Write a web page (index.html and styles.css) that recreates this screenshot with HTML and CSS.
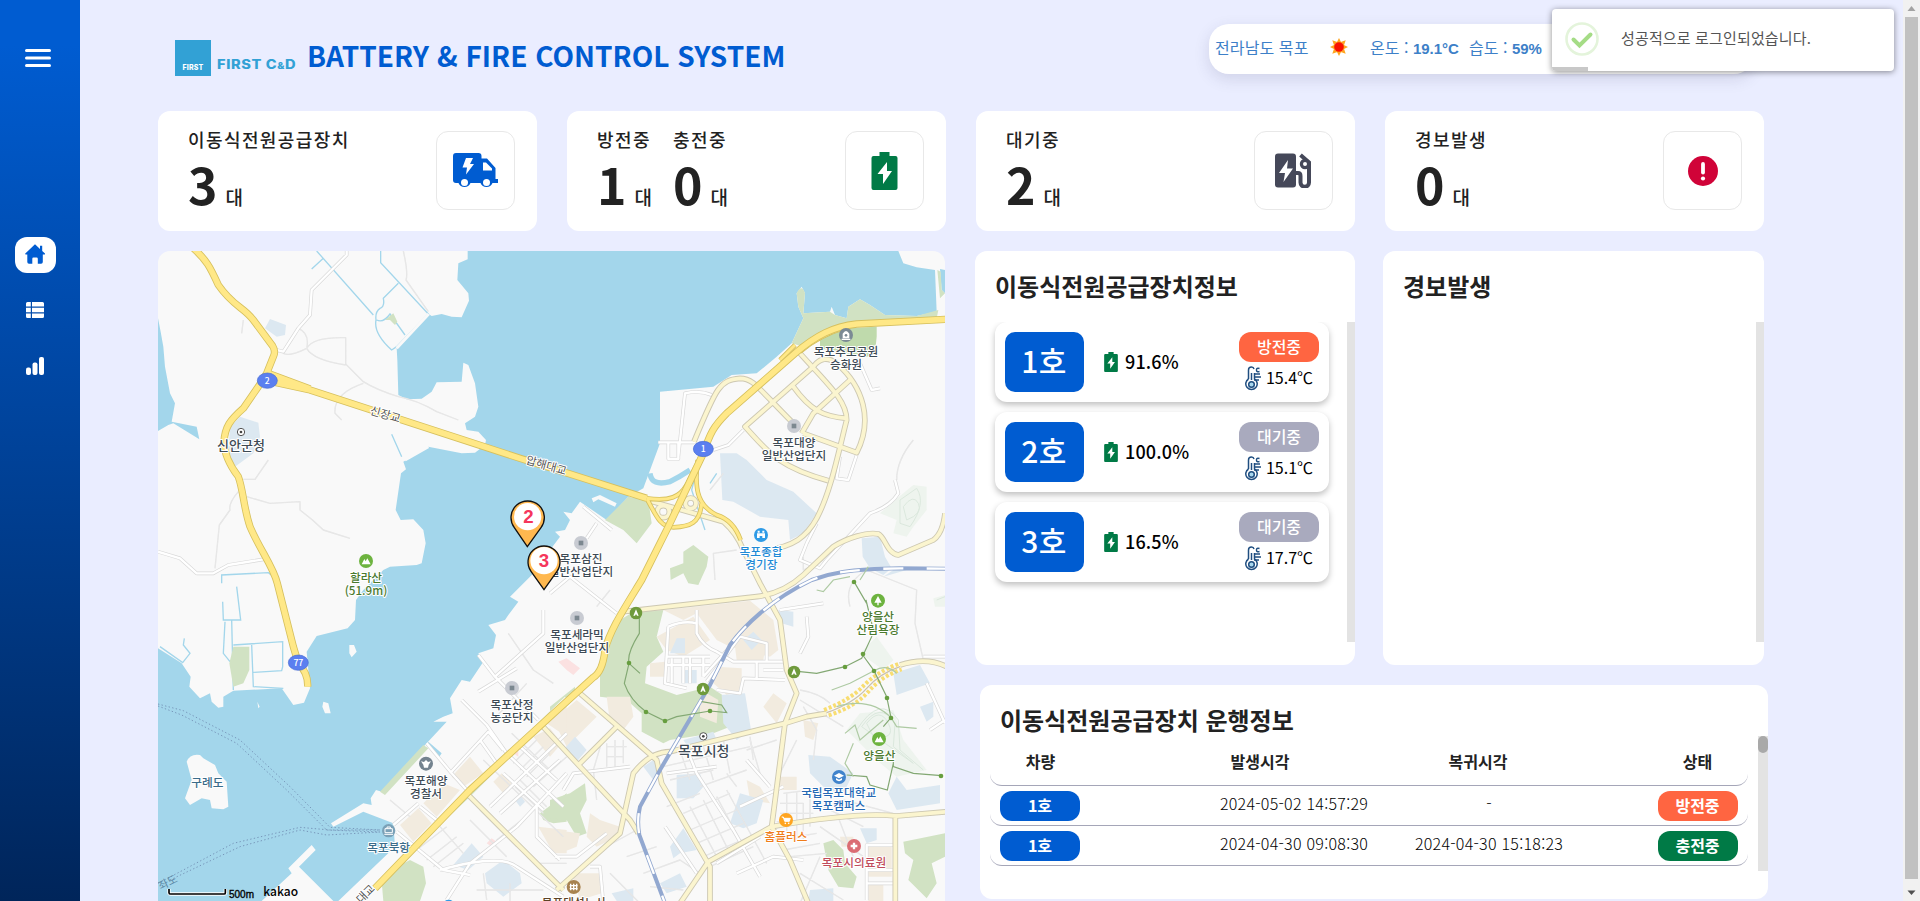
FILE: index.html
```html
<!DOCTYPE html>
<html lang="ko">
<head>
<meta charset="utf-8">
<title>BATTERY &amp; FIRE CONTROL SYSTEM</title>
<link rel="stylesheet" href="styles.css">
</head>
<body>
<svg class="defs" width="0" height="0" aria-hidden="true">
  <defs>
    <symbol id="battery" viewBox="0 0 26 38"><path d="M8 0h10v4h6q2 0 2 2v30q0 2-2 2H2q-2 0-2-2V6q0-2 2-2h6z" fill="#007a46"/><path d="M15.5 10 6 22h5.5v10L20.500 19h-5z" fill="#fff"/></symbol>
    <symbol id="thermo" viewBox="0 0 16 26"><g fill="none" stroke="#1f4e80" stroke-width="1.500"><path d="M3.500 13V4q0-3 3-3 2 0 2.500 2"/><path d="M3.500 13a5.700 5.700 0 1 0 6 0V7"/><path d="M6.500 7v7"/><path d="M9 8h6M9 11h7M9 14h5"/><path d="M14.500 2.500q-3-1-3 1.500t3 1.500"/><circle cx="6.500" cy="18.500" r="2.800" fill="#a9d8ef"/></g></symbol>
    <symbol id="peak" viewBox="-22 -22 44 44"><circle r="21" fill="#6db33f"/><path d="M-13 10-5-6l4 7 5-9 10 18z" fill="#fff"/></symbol>
    <symbol id="trailhead" viewBox="-20 -20 40 40"><circle r="19" fill="#6f9a3c"/><path d="M0-11 8 8H3L0 3l-3 5h-5z" fill="#fff"/></symbol>
    <symbol id="block" viewBox="-22 -22 44 44"><circle r="21" fill="#c8cbd2"/><rect x="-7" y="-7" width="14" height="14" fill="#7c8890"/></symbol>
    <symbol id="office" viewBox="-13 -13 26 26"><circle r="11" fill="#fff" stroke="#555" stroke-width="3"/><circle r="4" fill="#444"/></symbol>
  </defs>
</svg>
<div class="app">
  <aside class="sidebar">
    <svg class="menu" viewBox="0 0 26 18"><path d="M1.500 1.500h23M1.500 9h23M1.500 16.500h23" stroke="#fff" stroke-width="3" stroke-linecap="round"/></svg>
    <nav class="nav">
      <a class="nav-item active"><svg width="20" height="20" viewBox="0 0 20 20"><path d="M10 .3 15 5V1.800h2.200V7L20 9.600q.3.800-.6.900H17.800V18q0 1.700-1.700 1.700h-3.300v-5q0-1.200-1.200-1.200H8.500q-1.200 0-1.200 1.200v5H4q-1.700 0-1.700-1.700v-7.500H.8q-1-.2-.5-1z" fill="#005cd1"/></svg></a>
      <a class="nav-item"><svg width="18" height="16" viewBox="0 0 18 16" fill="#fff"><path d="M1.500 0H4.800v4.500H0v-3Q0 0 1.500 0zM6 0h10.500Q18 0 18 1.500v3H6zM0 5.800h4.800v4.400H0zM6 5.800h12v4.400H6zM0 11.500h4.800V16H1.500Q0 16 0 14.500zM6 11.500h12v3q0 1.500-1.500 1.500H6z"/></svg></a>
      <a class="nav-item"><svg width="18" height="18" viewBox="0 0 18 18" fill="#fff"><rect y="10.500" width="5" height="7.500" rx="2"/><rect x="6.500" y="5.500" width="5" height="12.500" rx="2"/><rect x="13" width="5" height="18" rx="2"/></svg></a>
    </nav>
  </aside>

  <main class="main">
    <header class="header">
      <div class="logo"><span class="logo-box">FIRST</span><span class="logo-name">FIRST C<small>&amp;</small>D</span></div>
      <h1 class="title">BATTERY &amp; FIRE CONTROL SYSTEM</h1>
      <div class="weather">
        <span class="region">전라남도 목포</span>
        <svg class="sun" viewBox="-9 -9 18 18"><path d="M0-9 2.500-4h-5zM0 9 2.500 4h-5zM-9 0l5-2.500v5zM9 0 4-2.500v5zM-6.700-6.700l5 1.700-3.300 3.300zM6.700-6.700l-5 1.700 3.300 3.300zM-6.700 6.700l5-1.700-3.300-3.300zM6.700 6.700l-5-1.700 3.300-3.300z" fill="#ffa51e"/><circle r="4.800" fill="#f81200"/></svg>
        <span class="temp">온도 : <b>19.1°C</b></span><span class="humid">습도 : <b>59%</b></span>
      </div>
    </header>

    <section class="stats">
      <article class="stat">
        <div class="stat-cols"><div><h2>이동식전원공급장치</h2><p><b>3</b>대</p></div></div>
        <div class="stat-icon"><svg width="45" height="36" viewBox="0 0 45 36"><path d="M3 0h22.500q3 0 3 3v2.500h5.500L42.500 15v11H45v4h-5.500a6.500 6.500 0 0 1-12 0h-10a6.500 6.500 0 0 1-12 0H3q-3 0-3-3V3q0-3 3-3z" fill="#005cd1"/><path d="M13 5h7l-3 6h4l-8 10.500 1-7H9.500zM30 9.500h3l6 6v2H30z" fill="#fff"/><circle cx="11.500" cy="29.500" r="3.500" fill="#fff"/><circle cx="33.500" cy="29.500" r="3.500" fill="#fff"/></svg></div>
      </article>
      <article class="stat">
        <div class="stat-cols"><div><h2>방전중</h2><p><b>1</b>대</p></div><div><h2>충전중</h2><p><b>0</b>대</p></div></div>
        <div class="stat-icon"><svg width="27" height="38"><use href="#battery"/></svg></div>
      </article>
      <article class="stat">
        <div class="stat-cols"><div><h2>대기중</h2><p><b>2</b>대</p></div></div>
        <div class="stat-icon"><svg width="37" height="35" viewBox="0 0 37 35"><path d="M3 .5h15q3 0 3 3v28q0 3-3 3H3q-3 0-3-3v-28q0-3 3-3z" fill="#454859"/><path d="M13 7 4 20h6l-1.500 9L18 15.500h-6z" fill="#fff"/><path d="M20 20h3q2.500 0 2.500 3v6.500a4.200 4.200 0 0 0 8.500 0V9.500L25.500 2" fill="none" stroke="#454859" stroke-width="4"/><circle cx="30" cy="11" r="3.600" fill="#fff" stroke="#454859" stroke-width="3.200"/></svg></div>
      </article>
      <article class="stat">
        <div class="stat-cols"><div><h2>경보발생</h2><p><b>0</b>대</p></div></div>
        <div class="stat-icon"><svg width="30" height="30" viewBox="0 0 30 30"><circle cx="15" cy="15" r="15" fill="#d00338"/><path d="M15 8v8.500" stroke="#fff" stroke-width="3.800" stroke-linecap="round"/><circle cx="15" cy="22.500" r="2.100" fill="#fff"/></svg></div>
      </article>
    </section>

    <section class="content">
      <div class="map">
      <svg viewBox="24 33 2361 1950" width="787" height="650">
        <defs>
          <g id="hwy">
            <path d="M125 20C170 60 180 80 205 135 250 200 280 200 310 240L368 318Q378 335 370 350L350 400 325 440 280 505C240 540 225 560 222 605 222 650 250 690 265 710 280 750 280 800 300 860 330 930 370 980 382 1030L430 1220 445 1270Q475 1300 473 1340"/>
            <path d="M355 400 480 447M355 423 480 450 1110 655 1260 702 1490 775"/>
            <path d="M2390 238 2120 252C2050 260 2000 285 1935 340L1730 520C1690 560 1680 580 1660 640L1555 860 1475 1020C1420 1110 1380 1170 1365 1230Q1358 1295 1330 1312L1200 1430 960 1650 675 1945"/>
          </g>
          <g id="ramp">
            <path d="M1490 775C1560 785 1590 770 1610 735L1650 655M1490 775C1520 830 1530 860 1570 862 1620 860 1650 850 1655 790M1643 660C1630 760 1650 800 1700 825Q1750 840 1772 900M1935 315 1890 360M2080 265Q2010 285 1950 335"/>
          </g>
          <g id="sec">
            <path d="M1632 605C1700 440 1710 420 1770 415 1810 415 1820 440 1930 550M1990 380 1785 560C1850 630 1880 680 2035 722M1950 340C2030 430 2090 480 2090 540 2060 660 2040 760 2000 835 1970 890 1930 920 1850 930M1990 380Q2020 340 2060 370C2140 440 2170 540 2120 638L1960 580M2100 420 1990 520 1955 580M1930 440C1980 510 2020 530 2090 535"/>
            <path d="M1490 780 1720 845Q1760 880 1780 930L1830 1030 1890 1140 1910 1290 1940 1360 1905 1450 1865 1760 1920 1860 1975 1990"/>
            <path d="M1420 1115 1820 1070Q1900 1060 1960 1005L2050 920C2090 895 2150 875 2185 882 2205 890 2210 940 2245 945L2350 900Q2378 880 2385 820"/>
            <path d="M1290 1360 1520 1560 1535 1630 1680 1880V1990M2390 1280Q2330 1250 2250 1275M2030 1420 1970 1430 1905 1450 1560 1535Q1500 1535 1450 1600L1410 1780 1220 1950M1170 1450 1290 1580 1440 1740 1465 1780M955 1665 1240 1950M1285 1575 1405 1455M2390 1715 2240 1728Q2120 1715 1865 1760L1675 1865 1590 1990M2236 1730V1990"/>
            <circle cx="1622" cy="790" r="16"/><circle cx="1540" cy="815" r="18"/>
          </g>
          <g id="minor">
            <path d="M590 33V45L485 150 480 225 445 265 400 335 380 330M24 935 90 955 140 1000H190L235 975 340 958M1585 650 1605 460Q1650 450 1685 465M1525 607H1640M1555 610V657H1585V610M1690 630 1735 615 1780 570M2070 650 2060 715 2095 720 2120 645M2130 370 2165 450 2190 445M2000 850 1970 910 1950 960 2010 985 2030 960 2160 820Q2220 800 2245 760L2235 720"/>
            <path d="M1385 870 1300 800M1310 895 1340 850M2020 1090 1890 1110M1400 1120 1260 1010 1200 1060M1180 1110V1180L1035 1310 985 1245M1035 1310 1070 1345 1165 1440M985 1355 1100 1285M935 1380 1010 1455 1070 1540M830 1510 905 1600 955 1655M900 1600 1015 1475 1060 1530M990 1500 1040 1570M810 1700 860 1740M730 1755 805 1690M740 1775 880 1890 960 1905M870 1890Q1050 1840 1100 1880L1240 1970M890 1980 960 1870 1100 1760 1250 1600M1020 1700 1250 1480M1050 1720 1230 1560M1080 1550 1240 1700M1060 1600 1180 1710M1110 1520 1220 1620M1160 1690V1790L1230 1860"/>
            <path d="M1640 1110V1180Q1660 1220 1700 1235L1750 1265H1900M1555 1160Q1600 1140 1640 1150M1555 1160 1545 1330 1610 1345M1550 1250H1680M1545 1275H1680M1600 1250V1330M1620 1250V1330M1660 1250V1310M1565 1255V1330M1660 1310 1740 1220M1670 1325 1770 1190 1850 1210V1265M1700 1350 1770 1360 1780 1315 1905 1320M1820 1265V1320M1840 1290H1900"/>
            <path d="M1950 1240 1975 1190 1970 1130M2320 1250H2385M2330 1330 2385 1450M2340 1470 2385 1440M1240 1650 1270 1600 1440 1580M1320 1880 1350 1880 1360 1990M1215 1850H1280L1370 1780M1620 1550 1640 1600 1750 1770 1830 1910M1760 1900 1870 1850 1960 1860M1700 1870 1830 1790M2150 1980V1815H2230M2150 1890H2230M2150 1930H2230M1770 1700 1900 1640M1790 1560 1860 1640M1545 1760 1640 1900M1550 1600 1700 1580"/>
          </g>
          <g id="lanes">
            <path d="M1540 1580 1800 1520M1560 1620 1690 1590M1650 1640 1790 1590M1550 1700 1650 1660M1600 1720 1740 1660M1620 1770 1760 1710M1640 1810 1780 1750M1660 1850 1800 1790M1680 1880 1810 1820M1590 1530 1620 1620M1660 1520 1690 1620M1720 1500 1740 1600M1800 1490 1810 1560M1620 1700 1700 1850M1660 1680 1740 1840M1700 1670 1780 1820M1730 1650 1850 1870"/>
            <path d="M1890 1690H1960V1800M1900 1660 1980 1650V1760M1890 1720H1990M1880 1745H1990M1910 1660V1800M1940 1655V1800M1880 1800 2000 1780M1900 1830 2010 1810M1920 1850 2030 1840M1370 1520H1430M1370 1550H1420M1370 1510V1580M1395 1500V1580M1420 1500V1570M1360 1490 1330 1590 1340 1680M1350 1830 1460 1770M1430 1850 1520 1820M1480 1900 1590 1860 1650 1900M1380 1900 1470 1990M1500 1940 1600 1950"/>
            <path d="M1090 1570 1160 1500M1110 1590 1180 1520M1130 1610 1200 1540M1150 1640 1250 1550M1095 1640 1180 1720M1110 1620 1190 1700M1000 1560 1240 1790M990 1710 1100 1820M960 1740 1070 1850M800 1830 890 1760M830 1860 920 1790M850 1880 940 1810M870 1760 940 1840M1040 1800 1140 1720M1210 1330 1150 1290 1075 1180M1030 1440 1130 1330M1085 1480 1200 1590M720 1680 780 1730M980 1950H1180M1000 1900 1010 1980M1080 1930V1985M1160 1870 1250 1870"/>
            <path d="M280 240 275 280M445 265Q480 280 470 325 420 350 400 340M470 325Q490 290 587 293V372L640 425Q680 450 745 470 800 480 860 515L925 540M470 325Q490 360 587 375M640 430Q550 460 555 520L575 540M760 33Q775 100 768 120L835 215M355 660 315 718H280M290 770 360 790 450 785V810Q490 840 520 870L600 895M265 755Q235 790 240 810L208 855 195 985M1950 1350Q2010 1360 2040 1390M1950 1380 2080 1460M1760 1640 1730 1600M1960 1400 2000 1470 1990 1560M1880 1500 1790 1530M2100 1100Q2080 1030 2150 990L2300 1050 2295 1150 2320 1260M1680 750 1720 700M2240 720Q2240 660 2290 600M1695 1020 1690 940 1760 930M2020 960 1960 990 1960 950M1380 1050 1340 1100M1890 1600 1940 1500M1800 1500 1830 1600M2020 1700 2140 1760M2060 1720 2110 1850M2010 1760 2140 1850M2080 1680 2230 1720M1950 1900 2080 1980M2010 1850 1950 1990"/>
          </g>
        </defs>

        <rect x="24" y="33" width="2361" height="1950" fill="#f9f9f9"/>
        <path class="water" d="M953 33V58L925 70 922 120 955 160 957 182 935 232 905 230 875 222 845 228 836 222 740 325 742 360 745 465 770 478 815 476 845 455 860 427 935 425 940 368 955 375 975 430 985 500 975 530 945 550 950 570 985 575 1008 600 1005 615 975 638 935 640 835 620 760 665 768 688 753 700 737 810 752 840 790 838 820 870 827 910 815 970 800 975 720 980 700 990 640 1050 618 1080 615 1140 593 1165 500 1188 470 1235 480 1345 462 1388 430 1395 395 1345 250 1352 220 1370 220 1400 205 1403 185 1385 180 1360 150 1375 118 1340 122 1310 95 1270 24 1225V1983H335L425 1900 415 1885 485 1815 497 1830 447 1880 550 1983H565L735 1820 730 1750 640 1715 550 1760 543 1750 640 1690 665 1695 662 1675 678 1650 695 1655 830 1510 890 1445 850 1445 880 1430 908 1420 900 1375 935 1320 960 1325 1000 1265 985 1240 1030 1225 1038 1185 1015 1155 1065 1140 1075 1125 1105 1085 1080 1070 1140 1010 1180 970 1200 930 1230 890 1215 875 1245 870 1260 840 1240 815 1265 820 1290 785 1370 840 1435 770 1480 745 1530 610V455L1690 440 1745 405 1820 400 1880 350 1925 310 1960 235 1945 200 1940 160 1955 140 1965 160 1960 220 2040 215 2045 200 2055 225 2090 235 2095 200 2130 178 2160 195 2205 225 2300 228 2360 215 2355 90 2300 82 2260 70 2245 33Z"/>
        <path class="water" d="M24 235 32 275 40 320 45 380 60 460 75 490 65 545 140 560 148 598 70 550 55 555 24 573ZM835 1505 875 1540 868 1550 832 1515ZM2370 87 2385 90V160L2375 150Z"/>
        <g class="canal">
          <path d="M500 33 670 225M485 87 520 55M692 33V68L835 222 740 320 725 330Q670 280 678 240 675 215 690 205 705 200 700 175L745 130M680 240Q700 250 720 222L765 285M725 583 755 650M215 1030 215 1005 355 998 370 1010M218 1085 220 1140H272L260 1040M225 1145 220 1240 240 1265M245 1140 250 1350M250 1215 398 1205V1280L395 1292 310 1297M305 1215 310 1340 400 1345M30 1220 98 1268 120 1240 100 1215 103 1195"/>
          <path d="M1500 700Q1505 740 1560 725 1590 710 1620 690" stroke-width="16"/>
          <path d="M1690 630Q1650 645 1640 690L1625 750 1665 870M1680 730 1700 700"/>
        </g>
        <path d="M740 325 836 222M765 660 835 620" class="quay"/>
        <path fill="#f9f9f9" d="M110 1565Q120 1540 150 1545L160 1555 195 1575 205 1600 230 1625 235 1700 220 1708 185 1705 180 1680 155 1675 120 1695 105 1675 125 1620ZM598 1215 612 1215 620 1235 605 1252 598 1240ZM520 1385 535 1390 542 1420 525 1420 517 1400ZM322 1385 329 1400 325 1405ZM1325 775 1350 765 1400 790 1395 800 1345 778 1330 787Z"/>

        <g fill="#d1e2c3">
          <path d="M1960 235 1945 200 1940 160Q1955 130 1965 160L1960 220 2040 215 2055 225 2090 235 2095 200 2130 178 2160 195 2205 225 2300 228 2365 210 2360 235 2120 250Q2020 280 1960 320L1925 310ZM2362 90 2372 95 2375 150 2385 160 2370 175ZM1365 840 1435 770 1495 780 1505 850 1460 910 1420 870ZM1560 985 1600 970 1600 935 1630 915 1675 950 1670 980 1645 1035 1615 1030 1600 1000 1562 1020ZM705 240 730 220 742 245 735 255 720 240ZM250 1220H298V1290L280 1330 250 1340 238 1270Z"/>
          <path d="M1395 1150 1450 1115 1540 1110 1520 1190 1540 1235 1490 1280 1485 1330 1580 1365 1680 1340 1725 1370 1720 1430 1740 1460 1690 1480 1560 1500 1540 1510 1475 1475 1475 1420 1430 1380 1350 1370 1350 1300 1375 1240ZM1200 1400 1275 1340 1275 1350 1200 1425ZM690 1655 820 1515 835 1525 705 1665ZM1245 1370 1060 1550 790 1815 800 1820 960 1670 1090 1540 1260 1390ZM695 1925 740 1880 780 1860 820 1880 828 1930 810 1983H700ZM1170 1720 1250 1660V1745L1210 1750 1180 1740Z"/>
          <path d="M1200 1680 1260 1660 1305 1630 1310 1680 1290 1720 1310 1780 1280 1790 1250 1740 1200 1735ZM2260 1805 2385 1780V1850L2345 1870 2360 1930 2330 1975 2275 1920 2290 1860 2265 1840ZM2020 1810 2050 1800 2080 1830 2085 1870 2120 1910 2110 1945 2065 1940 2035 1890Z"/>
        </g>
        <path fill="#bfdaac" d="M2010 290 2080 265 2180 260V290L2175 340 2150 350 2090 340 2010 325Z"/>
        <g fill="#eef4ee"><path d="M2235 780 2290 735 2330 740 2330 810 2290 860 2270 890 2230 880 2240 840 2190 820ZM2090 1470 2130 1420 2230 1410 2260 1500 2330 1590 2240 1610 2180 1560ZM2130 1240 2180 1190 2230 1260 2200 1290ZM2350 1075 2385 1065V1100L2355 1100Z"/></g>
        <g fill="#f2ebdf">
          <path d="M1455 1120 1800 1082 1870 1140 1885 1230 1860 1250 1740 1220 1700 1200 1640 1120 1600 1140 1540 1110ZM1750 1180 1800 1150 1850 1200 1840 1260H1760ZM1520 1190 1630 1130 1680 1200 1600 1250 1550 1230ZM1700 1280 1775 1285 1775 1350 1730 1365 1690 1330ZM1500 1270 1545 1265V1310H1500ZM1650 1390 1670 1360 1705 1380 1700 1450 1650 1430ZM1840 1400 1870 1360 1910 1390 1880 1450ZM1370 1370 1440 1370 1450 1430 1420 1470 1380 1450ZM1210 1440 1280 1380 1340 1430 1250 1520Z"/>
          <path d="M905 1610 960 1550 1000 1600 940 1640ZM820 1690 880 1630 930 1650 860 1730ZM750 1755 805 1705 845 1750 790 1805ZM1030 1625 1055 1600 1085 1630 1060 1660ZM1150 1490 1200 1465 1235 1510 1200 1550ZM1165 1760 1250 1770V1840L1210 1840ZM1190 1450 1250 1390V1490ZM1320 1720 1350 1740 1410 1760 1400 1790 1340 1820 1310 1790ZM1210 1770 1290 1780 1280 1820 1230 1840ZM1265 1900 1355 1900V1960L1290 1980ZM2155 1820H2225V1910H2155ZM2155 1930H2200V1983H2155ZM1890 1610H1940V1650H1890ZM1790 1620 1830 1640 1860 1690 1800 1680ZM1960 1440 2005 1450 1990 1500 1965 1490ZM2070 1790H2110V1820H2075Z"/>
        </g>
        <g fill="#dce8f1">
          <path d="M1710 640 1760 640 1790 660 1850 720 1930 755 2000 820 1960 880 1920 900 1915 840 1830 830 1750 785 1717 780ZM240 560 270 530 325 548 330 590 310 640 255 680 235 640ZM345 265 360 237 408 255 405 285 380 290ZM2135 895 2190 890 2205 950 2225 985 2200 1005 2160 985 2138 950ZM1975 1545 2040 1550 2110 1600 2080 1660 2030 1650 1980 1600ZM1715 1365 1785 1360 1803 1470 1760 1500 1720 1450ZM1580 1605 1650 1600 1660 1640 1630 1675H1580ZM1770 1660 1840 1680 1820 1750 1780 1765 1740 1750ZM1560 1820 1600 1765 1640 1830 1590 1840 1570 1855ZM1885 1110 1930 1115 1930 1160 1895 1150ZM1580 1195H1605V1240H1560ZM1595 1290H1640V1330H1595ZM1780 1200 1810 1175 1835 1200 1805 1230ZM2230 1300 2310 1275 2340 1330 2240 1365ZM2310 1400 2350 1385 2350 1430 2330 1445ZM2215 1660 2240 1610 2270 1650 2370 1635 2370 1690 2240 1710ZM2130 1765H2180V1800L2150 1810ZM2270 990H2230L2200 1010ZM1240 1530 1275 1490 1310 1530 1280 1565ZM1480 1580 1510 1560 1530 1590 1510 1620ZM1600 1500 1690 1475 1700 1500 1620 1530ZM910 1875 965 1810 1000 1850 955 1890ZM1005 1900 1060 1860 1110 1900 1115 1930 1060 1970 1010 1930ZM1095 1680 1110 1665 1125 1685 1110 1700ZM1385 1960 1450 1945V1983H1400ZM1530 1930 1590 1900 1610 1940 1550 1960ZM1980 1950 2050 1945 2050 1983H1975Z"/>
        </g>
        <path fill="#fbe1e1" d="M1225 1265 1250 1255 1290 1285 1270 1305 1250 1290ZM1010 1810 1025 1795 1040 1805 1025 1820ZM1090 1540 1105 1530V1550Z"/>

        <use href="#lanes" class="lane-case"/><use href="#lanes" class="lane"/>
        <use href="#minor" class="minor-case"/><use href="#minor" class="minor"/>
        <g fill="none" stroke="#dbe8dd" stroke-width="3"><path d="M2250 780 2300 745Q2330 790 2280 860L2250 850ZM2260 800Q2290 760 2305 790T2270 840ZM2150 1450Q2190 1400 2215 1450T2170 1490ZM2135 1460Q2190 1380 2235 1450L2230 1520 2290 1570ZM2120 1470Q2190 1360 2245 1440L2250 1530 2320 1590M2360 1080 2385 1070"/></g>
        <use href="#sec" class="sec-case"/><use href="#sec" class="sec"/>
        <use href="#ramp" class="ramp-case"/><use href="#ramp" class="ramp"/>
        <use href="#hwy" class="hwy-case"/><use href="#hwy" class="hwy"/>
        <path d="M2030 1418Q2110 1390 2150 1345T2250 1280" fill="none" stroke="#cbc1ac" stroke-width="4"/>
        <path d="M2022 1410Q2100 1380 2140 1338T2245 1272M2036 1426Q2116 1400 2156 1354T2255 1288" fill="none" stroke="#f8dd72" stroke-width="12" stroke-dasharray="9 6"/>
        <g fill="none"><path d="M2390 986 2250 985C2090 988 2040 1000 1985 1020 1860 1080 1780 1160 1740 1215L1680 1335 1530 1590 1470 1700Q1460 1740 1468 1785L1545 1990" stroke="#92a8d0" stroke-width="12"/><path d="M2390 986 2250 985C2090 988 2040 1000 1985 1020 1860 1080 1780 1160 1740 1215L1680 1335 1530 1590 1470 1700Q1460 1740 1468 1785L1545 1990" stroke="#fff" stroke-width="7" stroke-dasharray="60 70"/></g>
        <g fill="none" stroke="#83a873" stroke-width="3.500">
          <path d="M1468 1130V1180Q1430 1240 1437 1270L1423 1330Q1440 1380 1488 1415L1545 1443 1580 1430 1680 1413 1730 1418 1715 1395 1655 1385M1437 1270 1470 1300M1950 1295 2000 1300 2085 1280 2135 1255 2165 1190 2170 1170 2148 1080 2150 1090 2112 1025M2138 1245 2172 1292 2210 1370 2223 1433 2200 1460M2230 1560 2230 1580 2290 1600 2375 1607M2230 1570 2212 1650 2160 1635 2150 1610 2090 1605"/>
          <path stroke="#aecaa3" d="M2045 1350 2100 1330 2172 1292Q2210 1270 2240 1300M2060 1400Q2160 1370 2223 1433L2240 1460 2300 1465M2085 1480 2115 1455 2130 1500 2200 1440M2110 1510 2085 1570 2110 1610M2000 1050 2020 1055 2050 1020 2100 1010M2130 1020 2155 980"/>
        </g>
        <g fill="#679e3f"><circle cx="1437" cy="1269" r="7"/><circle cx="1488" cy="1416" r="7"/><circle cx="1545" cy="1443" r="7"/><circle cx="1680" cy="1413" r="7"/><circle cx="2085" cy="1281" r="7"/><circle cx="2139" cy="1242" r="7"/><circle cx="2172" cy="1293" r="7"/><circle cx="2211" cy="1374" r="7"/><circle cx="2223" cy="1434" r="7"/><circle cx="2112" cy="1026" r="7"/><circle cx="2373" cy="1608" r="7"/></g>
        <g fill="none" stroke="#7796ba" stroke-width="3" stroke-dasharray="4 7"><path d="M24 1392 100 1412 270 1500 420 1640 540 1762 690 1770M24 1398 95 1425 260 1510 410 1650 530 1770 690 1776M24 1930 100 1890 250 1810 450 1762 540 1770 690 1770M60 1920 270 1820 450 1770 530 1785 690 1776"/></g>

        <g class="shield"><ellipse cx="352" cy="422" rx="30" ry="23"/><ellipse cx="1660" cy="627" rx="30" ry="23"/><ellipse cx="445" cy="1268" rx="30" ry="23"/></g>
        <g class="shield-no"><text x="352" y="431">2</text><text x="1660" y="636">1</text><text x="445" y="1277">77</text></g>
        <use href="#office" x="260" y="563" width="26" height="26"/><use href="#office" x="1647" y="1476" width="26" height="26"/>
        <use href="#peak" x="626" y="941" width="44" height="44"/><use href="#peak" x="2165" y="1475" width="44" height="44"/>
        <use href="#trailhead" x="1438" y="1099" width="40" height="40"/><use href="#trailhead" x="1639" y="1327" width="40" height="40"/><use href="#trailhead" x="1912" y="1276" width="40" height="40"/>
        <use href="#block" x="1910" y="536" width="44" height="44"/><use href="#block" x="1271" y="887" width="44" height="44"/><use href="#block" x="1259" y="1112" width="44" height="44"/><use href="#block" x="1064" y="1322" width="44" height="44"/>
        <g class="poi">
          <circle cx="2088" cy="285" r="21" fill="#7b8a94"/><path fill="#fff" d="M2078 295v-14q10-16 20 0v14zM2075 296h26v4h-26z"/><circle cx="2088" cy="286" r="4" fill="#7b8a94"/>
          <circle cx="1833" cy="885" r="21" fill="#2f9be6"/><path fill="#fff" d="M1821 880h24v14h-8v-6h-8v6h-8zM1823 872h6v6h-6zM1837 872h6v6h-6z"/>
          <circle cx="2184" cy="1082" r="21" fill="#6db33f"/><path fill="#fff" d="M2184 1068 2195 1088H2186V1096H2182V1088H2173Z"/>
          <circle cx="828" cy="1571" r="21" fill="#74838f"/><path fill="#fff" d="M813 1564 822 1566 828 1560 834 1566 843 1564 836 1574 834 1583H822L820 1574Z"/>
          <circle cx="716" cy="1772" r="20" fill="#7ba1b7"/><path d="M705 1766h22v12h-22zM711 1766v-5h10v5M703 1783h26" fill="none" stroke="#fff" stroke-width="3"/>
          <circle cx="2067" cy="1611" r="21" fill="#3f83cc"/><path fill="#fff" d="M2067 1599 2082 1607 2067 1615 2052 1607ZM2058 1614 2067 1619 2076 1614V1620Q2067 1627 2058 1620Z"/>
          <circle cx="1908" cy="1740" r="21" fill="#ffa41f"/><path d="M1895 1731h5l4 13h14l3-9h-19" fill="#fff" stroke="#fff" stroke-width="3"/><circle cx="1906" cy="1750" r="2.500" fill="#fff"/><circle cx="1916" cy="1750" r="2.500" fill="#fff"/>
          <circle cx="2112" cy="1818" r="21" fill="#db6d74"/><path d="M2112 1808v20M2102 1818h20" stroke="#fff" stroke-width="7"/>
          <circle cx="1271" cy="1941" r="21" fill="#a88350"/><path d="M1262 1931v20M1271 1931v20M1280 1931v20M1259 1937h24M1259 1946h24" stroke="#fff" stroke-width="4"/>
          <circle cx="896" cy="1997" r="18" fill="#2f9be6"/>
        </g>
        <g class="label">
          <text x="273" y="630" font-size="39">신안군청</text><text x="1661" y="1548" font-size="42">목포시청</text>
          <text transform="translate(703 535) rotate(16)" class="road">신장교</text><text transform="translate(1186 688) rotate(16)" class="road">압해대교</text><text transform="translate(655 1970) rotate(-45)" class="road">대교</text>
          <text x="2088" y="347">목포추모공원</text><text x="2088" y="386">승화원</text>
          <text x="1932" y="620">목포대양</text><text x="1932" y="659">일반산업단지</text>
          <text x="1293" y="970">목포삼진</text><text x="1293" y="1009">일반산업단지</text>
          <text x="1281" y="1196">목포세라믹</text><text x="1281" y="1235">일반산업단지</text>
          <text x="1086" y="1406">목포산정</text><text x="1086" y="1445">농공단지</text>
          <text x="828" y="1635">목포해양</text><text x="828" y="1674">경찰서</text>
          <g fill="#3a6c8a"><text x="716" y="1836">목포북항</text><text x="172" y="1640">구례도</text></g>
          <g fill="#1f8ad6"><text x="1833" y="948">목포종합</text><text x="1834" y="987">경기장</text></g>
          <g fill="#4b7a2f"><text x="648" y="1025">할라산</text><text x="648" y="1064">(51.9m)</text><text x="2184" y="1144">양을산</text><text x="2184" y="1183">산림욕장</text><text x="2188" y="1560">양을산</text></g>
          <g fill="#2468b4"><text x="2066" y="1672">국립목포대학교</text><text x="2066" y="1711">목포캠퍼스</text></g>
          <text x="1908" y="1802" fill="#ef7d1a">홈플러스</text><text x="2112" y="1880" fill="#c04c5c">목포시의료원</text>
          <text x="1272" y="2001" fill="#5c4327">목포대성노사</text>
        </g>
        <text transform="translate(32 1950) rotate(-26)" class="sea">좌도</text>
        <g stroke="#111" stroke-width="4" fill="#ffb84f"><path d="M1132 920 1093 863A50 50 0 1 1 1173 863Z"/><path d="M1182 1049 1143 994A48 48 0 1 1 1221 994Z"/></g>
        <circle cx="1133" cy="830" r="41" fill="#fff"/><circle cx="1182" cy="962" r="41" fill="#fff"/>
        <g class="pin-no"><text x="1135" y="850">2</text><text x="1182" y="982">3</text></g>
        <path d="M57 1947V1958Q57 1962 62 1962H222Q226 1962 226 1958V1947" fill="none" stroke="#fff" stroke-width="10"/><path d="M57 1947V1958Q57 1962 62 1962H222Q226 1962 226 1958V1947" fill="none" stroke="#000" stroke-width="5"/>
        <text x="237" y="1974" class="scale">500m</text><text x="340" y="1969" class="kakao">kakao</text>
      </svg>
      </div>

      <div class="side">
        <div class="panels">
          <section class="panel">
            <h3>이동식전원공급장치정보</h3>
            <div class="scroll">
              <div class="vehicles">
                <article class="vehicle"><span class="no">1호</span><svg class="bat" width="14" height="20"><use href="#battery"/></svg><span class="pct">91.6%</span><div class="state"><span class="tag discharge">방전중</span><span class="deg"><svg width="16" height="26"><use href="#thermo"/></svg>15.4℃</span></div></article>
                <article class="vehicle"><span class="no">2호</span><svg class="bat" width="14" height="20"><use href="#battery"/></svg><span class="pct">100.0%</span><div class="state"><span class="tag idle">대기중</span><span class="deg"><svg width="16" height="26"><use href="#thermo"/></svg>15.1℃</span></div></article>
                <article class="vehicle"><span class="no">3호</span><svg class="bat" width="14" height="20"><use href="#battery"/></svg><span class="pct">16.5%</span><div class="state"><span class="tag idle">대기중</span><span class="deg"><svg width="16" height="26"><use href="#thermo"/></svg>17.7℃</span></div></article>
              </div>
              <div class="track"></div>
            </div>
          </section>
          <section class="panel">
            <h3>경보발생</h3>
            <div class="scroll"><div class="vehicles"></div><div class="track"></div></div>
          </section>
        </div>
        <section class="trips">
          <h3>이동식전원공급장치 운행정보</h3>
          <div class="trip-scroll">
            <div class="table">
              <div class="row head"><span>차량</span><span>발생시각</span><span>복귀시각</span><span>상태</span></div>
              <div class="row"><span><i class="tag unit">1호</i></span><span class="time">2024-05-02 14:57:29</span><span class="time">-</span><span><i class="tag discharge">방전중</i></span></div>
              <div class="row"><span><i class="tag unit">1호</i></span><span class="time">2024-04-30 09:08:30</span><span class="time">2024-04-30 15:18:23</span><span><i class="tag charge">충전중</i></span></div>
            </div>
            <div class="track wide"><div class="thumb"></div></div>
          </div>
        </section>
      </div>
    </section>
  </main>

  <div class="page-scroll"><svg width="17" height="17"><path d="M4.500 11h8L8.500 6z" fill="#a3a3a3"/></svg><div class="page-thumb"></div><svg width="17" height="17"><path d="M4.500 6.500h8L8.500 11z" fill="#505050"/></svg></div>
</div>

<div class="toast">
  <svg width="34" height="34" viewBox="0 0 34 34"><circle cx="17" cy="17" r="15.500" fill="none" stroke="#e4f4db" stroke-width="2.600"/><path d="M8.500 17.500 14.500 23.500 25.500 12.500" fill="none" stroke="#a5dc86" stroke-width="4" stroke-linecap="round"/></svg>
  <span>성공적으로 로그인되었습니다.</span>
  <div class="toast-bar"></div>
</div>
</body>
</html>
```
FILE: styles.css
```css
* { box-sizing: border-box; margin: 0; padding: 0; }
body { width: 1920px; height: 901px; overflow: hidden; background: #eaedff; color: #222; font-family: "Noto Sans CJK KR", "Noto Sans", sans-serif; }
.defs { position: absolute; }
.app { display: grid; grid-template-columns: 80px 1fr 17px; height: 901px; }
.sidebar { background: linear-gradient(#005cd1 5%, #00255a); display: flex; flex-direction: column; }
.menu { width: 26px; height: 18px; margin: 49px 0 0 25px; }
.nav { margin: 170px 0 0 15px; display: flex; flex-direction: column; gap: 20px; width: 41px; }
.nav-item { height: 36px; display: flex; align-items: center; justify-content: center; border-radius: 12px; padding: 0 2px 2px 0; }
.nav-item.active { background: #fff; }

.main { padding-left: 78px; overflow: hidden; }
.header { height: 111px; display: flex; align-items: flex-start; }
.logo { display: flex; margin: 40px 0 0 17px; width: 132px; color: #32a1d5; font-family: Inter, "Open Sans", sans-serif; font-weight: 800; }
.logo-box { width: 36px; height: 36px; background: #32a1d5; color: #fff; font-size: 7px; line-height: 9px; padding-top: 23px; text-align: center; letter-spacing: .2px; }
.logo-name { font-size: 12.500px; line-height: 14px; margin: 18px 0 0 6px; white-space: nowrap; letter-spacing: .5px; transform: scaleX(1.17); transform-origin: 0 0; }
.logo-name small { font-size: 9px; }
.title { margin-top: 33px; font-size: 28px; line-height: 44px; font-weight: 700; color: #005cd1; white-space: nowrap; }
.weather { margin: 24px 0 0 auto; width: 545px; height: 50px; margin-right: 149px; border-radius: 20px; background: #fff; box-shadow: 0 5px 15px rgba(60, 60, 100, .15); display: flex; align-items: center; padding: 0 0 4px 6px; color: #3d80c8; font-size: 16px; white-space: nowrap; }
.weather b { font-family: "Liberation Sans", Arial, sans-serif; font-size: 15px; }
.region { width: 115px; letter-spacing: .1px; }
.sun { width: 18px; height: 18px; margin-right: 22px; }
.temp { width: 99px; }

.stats { display: grid; grid-template-columns: repeat(4, 379px); gap: 30px; }
.stat { height: 120px; background: #fff; border-radius: 12px; display: flex; justify-content: space-between; padding: 20px 22px 0 30px; }
.stat-cols { display: flex; gap: 21px; }
.stat h2 { font-size: 18px; line-height: 20px; font-weight: 500; letter-spacing: 1.400px; margin-top: -2px; }
.stat p { font-size: 19px; font-weight: 500; line-height: 56px; margin-top: 6px; display: flex; align-items: baseline; gap: 8px; }
.stat b { font-size: 50px; font-weight: 700; }
.stat-icon { width: 79px; height: 79px; border: 1px solid #e8e8e8; border-radius: 12px; display: flex; align-items: center; justify-content: center; }

.content { display: flex; margin-top: 20px; }
.map { width: 787px; height: 650px; border-radius: 12px 12px 0 0; overflow: hidden; }
.map svg { display: block; }
.water { fill: #a3d6eb; }
.canal { fill: none; stroke: #a3d6eb; stroke-width: 4; }
.quay { fill: none; stroke: #f9f9f9; stroke-width: 9; }
.hwy-case, .hwy, .ramp-case, .ramp, .sec-case, .sec, .minor-case, .minor, .lane-case, .lane { fill: none; stroke-linejoin: round; }
.hwy-case { stroke: #d6c05e; stroke-width: 22px; }
.hwy { stroke: #ffe887; stroke-width: 17px; }
.ramp-case { stroke: #d6c05e; stroke-width: 14px; }
.ramp { stroke: #ffe887; stroke-width: 9px; }
.sec-case { stroke: #cdc8b2; stroke-width: 17px; }
.sec { stroke: #fbf5cf; stroke-width: 11.500px; }
.minor-case { stroke: #d8d8d8; stroke-width: 11px; }
.minor { stroke: #fff; stroke-width: 7px; }
.lane-case { stroke: #e2e2e2; stroke-width: 4px; }
.lane { stroke: #f3f3f3; stroke-width: 1px; }
.shield { fill: #5b7ff0; stroke: #466bd2; stroke-width: 2px; }
.shield-no { fill: #fff; font-size: 26px; font-weight: 500; text-anchor: middle; }
.label { font-size: 35px; font-weight: 500; text-anchor: middle; fill: #3d4a55; stroke: #fff; stroke-width: 6px; paint-order: stroke; stroke-linejoin: round; }
.label .road { font-size: 34px; font-weight: 400; fill: #555; }
.sea { font-size: 32px; fill: #5a86a3; }
.pin-no { font: bold 56px "Liberation Sans", Arial, sans-serif; fill: #f5365c; text-anchor: middle; }
.scale { font: 30px "Liberation Sans", Arial, sans-serif; fill: #000; stroke: #000; stroke-width: 1px; }
.kakao { font-size: 36px; font-weight: 500; fill: #000; }

.side { margin-left: 30px; }
.panels { display: grid; grid-template-columns: 380px 381px; gap: 28px; }
.panel { height: 414px; background: #fff; border-radius: 12px; }
h3 { font-size: 24px; line-height: 36px; font-weight: 700; }
.panel h3 { padding: 17px 0 0 20px; height: 71px; }
.scroll { display: flex; height: 320px; overflow: hidden; }
.vehicles { flex: 1; padding: 0 18px 0 20px; display: flex; flex-direction: column; gap: 10px; }
.vehicle { height: 80px; flex: none; background: #fff; border-radius: 12px; box-shadow: 0 3px 6px rgba(0, 0, 0, .25); display: flex; align-items: center; padding: 10px; color: #000; }
.no { width: 79px; height: 60px; border-radius: 10px; background: #005cd1; color: #fff; font-size: 30px; font-weight: 500; line-height: 57px; text-align: center; padding-right: 1px; letter-spacing: .4px; }
.bat { margin: 0 7px 0 20px; }
.pct { font-size: 18px; font-weight: 500; line-height: 24px; margin-top: -2px; letter-spacing: .15px; }
.state { margin-left: auto; width: 80px; display: flex; flex-direction: column; align-items: center; }
.tag { display: block; width: 80px; height: 30px; border-radius: 12px; color: #fff; font-size: 16px; font-weight: 500; font-style: normal; line-height: 29px; text-align: center; }
.discharge { background: #ff6541; }
.idle { background: #a9aabe; }
.charge { background: #007a46; }
.unit { background: #005cd1; }
.deg { display: flex; align-items: center; gap: 5px; height: 30px; font-size: 16px; line-height: 24px; padding-bottom: 1px; }
.deg svg { margin-top: 4px; }
.track { width: 8px; background: #e3e3e3; }

.trips { width: 788px; height: 214px; margin: 20px 0 0 5px; background: #fff; border-radius: 12px; }
.trips h3 { padding: 17px 0 0 20px; height: 51px; }
.trip-scroll { display: flex; justify-content: space-between; height: 135px; padding-left: 10px; }
.table { width: 758px; }
.row { height: 40px; display: grid; grid-template-columns: 100px 114px 180px 15px 180px 1fr 101px; align-items: center; text-align: center; border-bottom: 1px solid #a5a6b8; border-radius: 12px; font-size: 16px; padding-top: 1px; }
.row > :nth-child(2) { grid-column: 3; }
.row > :nth-child(3) { grid-column: 5; }
.row > :nth-child(4) { grid-column: 7; }
.row .tag { margin: 0 auto; font-weight: 700; }
.row.head { height: 50px; grid-template-columns: 101px 79px 180px 38px 180px 1fr 101px; font-weight: 700; padding-bottom: 0; }
.time { color: #000; font-weight: 300; margin-top: -6px; letter-spacing: .27px; white-space: nowrap; }
.wide { width: 10px; }
.thumb { height: 17px; border-radius: 5px; background: #a9a9a9; }

.page-scroll { background: #f1f1f1; display: flex; flex-direction: column; }
.page-scroll svg { display: block; flex: none; }
.page-thumb { width: 13px; height: 862px; margin-left: 2px; background: #c1c1c1; }
.page-scroll svg:last-child { margin-top: auto; }

.toast { position: absolute; left: 1552px; top: 9px; width: 342px; height: 62px; background: #fff; border-radius: 4px; box-shadow: 0 1px 6px rgba(0, 0, 0, .45); display: flex; align-items: center; padding: 0 0 2px 13px; overflow: hidden; }
.toast span { margin: -3px 0 0 22px; font-size: 15px; letter-spacing: .15px; color: #545454; }
.toast-bar { position: absolute; left: 0; bottom: 0; width: 36px; height: 4px; background: #c8c8c8; }
```
